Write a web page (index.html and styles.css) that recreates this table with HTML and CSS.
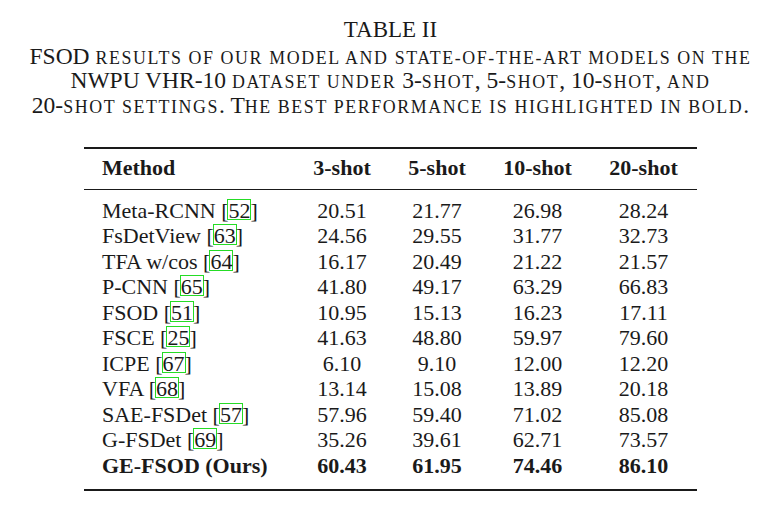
FILE: index.html
```html
<!DOCTYPE html>
<html lang="en">
<head>
<meta charset="utf-8">
<title>Table II</title>
<link rel="stylesheet" href="styles.css">
</head>
<body>
<div class="page">
  <div class="title">TABLE II</div>
  <div class="caption">FSOD <span class="sc">results of our model and state-of-the-art models on the</span><br>NWPU VHR-10 <span class="sc">dataset under</span> 3-<span class="sc">shot</span>, 5-<span class="sc">shot</span>, 10-<span class="sc">shot</span>, <span class="sc">and</span><br>20-<span class="sc">shot settings</span>. T<span class="sc">he best performance is highlighted in bold</span>.</div>
  <table class="results">
    <colgroup>
      <col class="c-method"><col class="c-3"><col class="c-5"><col class="c-10"><col class="c-20">
    </colgroup>
    <thead>
      <tr><th class="method">Method</th><th>3-shot</th><th>5-shot</th><th>10-shot</th><th>20-shot</th></tr>
    </thead>
    <tbody>
      <tr class="first"><td class="method">Meta-RCNN [<span class="cite">52</span>]</td><td>20.51</td><td>21.77</td><td>26.98</td><td>28.24</td></tr>
      <tr><td class="method">FsDetView [<span class="cite">63</span>]</td><td>24.56</td><td>29.55</td><td>31.77</td><td>32.73</td></tr>
      <tr><td class="method">TFA w/cos [<span class="cite">64</span>]</td><td>16.17</td><td>20.49</td><td>21.22</td><td>21.57</td></tr>
      <tr><td class="method">P-CNN [<span class="cite">65</span>]</td><td>41.80</td><td>49.17</td><td>63.29</td><td>66.83</td></tr>
      <tr><td class="method">FSOD [<span class="cite">51</span>]</td><td>10.95</td><td>15.13</td><td>16.23</td><td>17.11</td></tr>
      <tr><td class="method">FSCE [<span class="cite">25</span>]</td><td>41.63</td><td>48.80</td><td>59.97</td><td>79.60</td></tr>
      <tr><td class="method">ICPE [<span class="cite">67</span>]</td><td>6.10</td><td>9.10</td><td>12.00</td><td>12.20</td></tr>
      <tr><td class="method">VFA [<span class="cite">68</span>]</td><td>13.14</td><td>15.08</td><td>13.89</td><td>20.18</td></tr>
      <tr><td class="method">SAE-FSDet [<span class="cite">57</span>]</td><td>57.96</td><td>59.40</td><td>71.02</td><td>85.08</td></tr>
      <tr><td class="method">G-FSDet [<span class="cite">69</span>]</td><td>35.26</td><td>39.61</td><td>62.71</td><td>73.57</td></tr>
      <tr class="last best"><td class="method">GE-FSOD (Ours)</td><td>60.43</td><td>61.95</td><td>74.46</td><td>86.10</td></tr>
    </tbody>
  </table>
</div>
</body>
</html>
```

FILE: styles.css
```css
html, body {
  margin: 0;
  padding: 0;
  background: #ffffff;
}

body {
  font-family: "Liberation Serif", "Times New Roman", serif;
  color: #1a1a1a;
  font-size: 22px;
}

.page {
  padding: 16.7px 0 0 22px;
}

.title {
  text-align: center;
  font-size: 23px;
  line-height: 25px;
  margin-bottom: 2px;
}

.caption {
  text-align: center;
  font-size: 23.5px;
  line-height: 24.7px;
  white-space: nowrap;
}

.caption .sc {
  text-transform: uppercase;
  font-size: 0.76em;
  line-height: 1;
  letter-spacing: 1.6px;
}

.results {
  margin: 29.2px auto 0;
  width: 613px;
  table-layout: fixed;
  border-collapse: separate;
  border-spacing: 0;
  line-height: 25.5px;
}

.c-method { width: 211px; }
.c-3 { width: 94px; }
.c-5 { width: 96px; }
.c-10 { width: 105px; }
.c-20 { width: 107px; }

.results th,
.results td {
  text-align: center;
  padding: 0;
  white-space: nowrap;
  font-weight: normal;
}

.results th {
  font-weight: bold;
  border-top: 2px solid #1a1a1a;
  border-bottom: 1px solid #1a1a1a;
  padding-top: 5.6px;
  padding-bottom: 8.6px;
}

.results .method {
  text-align: left;
  padding-left: 18px;
}

.results tr.first td {
  padding-top: 8.3px;
}

.results tr.last td {
  padding-bottom: 10.4px;
  border-bottom: 2px solid #1a1a1a;
}

.results tr.best td {
  font-weight: bold;
}

.cite {
  display: inline-block;
  line-height: 16px;
  padding: 3px 0 0;
  margin: 0 -1px;
  border: 1.6px solid #25dc25;
}
```
